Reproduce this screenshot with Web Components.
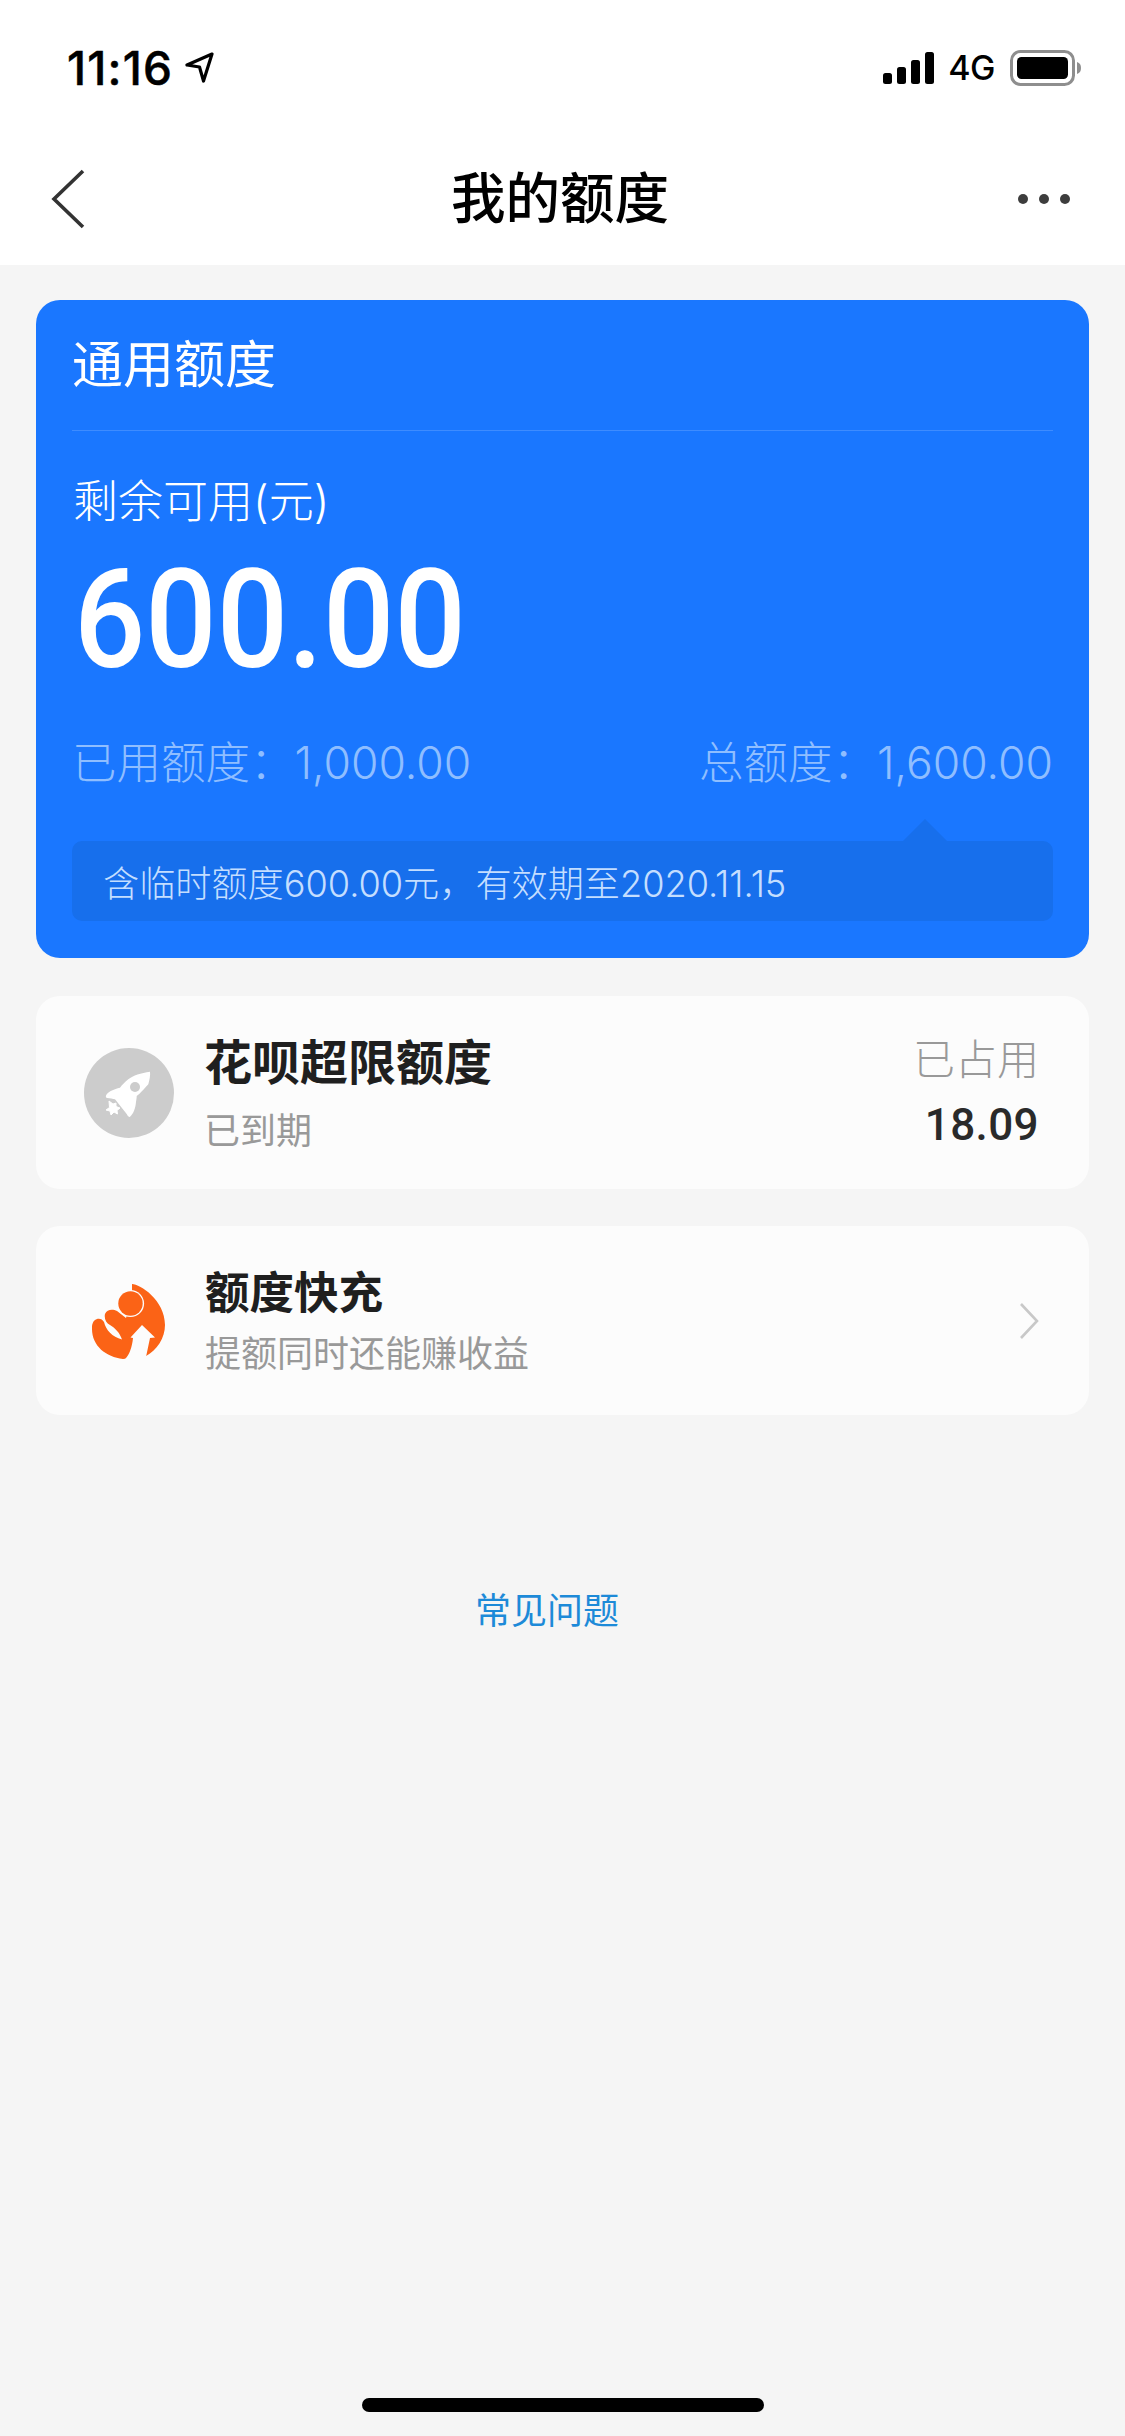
<!DOCTYPE html>
<html lang="zh">
<head>
<meta charset="utf-8">
<title>我的额度</title>
<style>
  html, body { margin: 0; padding: 0; }
  body {
    background: #f5f5f5;
    font-family: Inter, "Noto Sans CJK SC", sans-serif;
  }
  quota-page { height: 2436px; }
</style>
</head>
<body>
<quota-page>
  <status-bar time="11:16"></status-bar>
  <nav-bar title="我的额度"></nav-bar>
  <quota-card
    heading="通用额度" label="剩余可用(元)" amount="600.00"
    used="1,000.00" total="1,600.00"
    note="含临时额度600.00元，有效期至2020.11.15"></quota-card>
  <expired-row name="花呗超限额度" sub="已到期" tag="已占用" value="18.09"></expired-row>
  <charge-row name="额度快充" sub="提额同时还能赚收益"></charge-row>
  <faq-link text="常见问题"></faq-link>
</quota-page>

<script>
// --- Page shell ---
class QuotaPage extends HTMLElement {
  constructor() {
    super();
    this.attachShadow({ mode: 'open' });
    this.shadowRoot.innerHTML = `
      <style>
        :host { display: flex; flex-direction: column; box-sizing: border-box; }
        .home { margin: auto auto 24px; width: 402px; height: 14px; border-radius: 7px; background: #000; flex: none; }
      </style>
      <slot></slot>
      <div class="home"></div>
    `;
  }
}
customElements.define('quota-page', QuotaPage);

// --- Status bar ---
class StatusBar extends HTMLElement {
  constructor() {
    super();
    this.attachShadow({ mode: 'open' });
    this.shadowRoot.innerHTML = `
      <style>
        :host { display: flex; align-items: center; height: 132px; box-sizing: border-box; padding: 4px 43px 0 67px; background: #fff; color: #000; }
        .time { font: 500 46px/44px Inter, sans-serif; letter-spacing: 1.2px; -webkit-text-stroke: .5px #000; }
        .loc { margin-left: 11px; }
        .right { margin-left: auto; display: flex; align-items: center; }
        .net { font: 500 34px/34px Inter, sans-serif; margin: 0 15px 0 13px; letter-spacing: -.5px; }
      </style>
      <span class="time">${this.getAttribute('time')}</span>
      <svg class="loc" width="30" height="32" viewBox="0 0 30 32">
        <path d="M28 2 L3 13 L15.5 15 L19.5 29 Z" fill="none" stroke="#000" stroke-width="3.2" stroke-linejoin="round"/>
      </svg>
      <div class="right">
        <svg width="52" height="32" viewBox="0 0 52 32" fill="#000">
          <rect x="0" y="21" width="9" height="11" rx="2.5"/>
          <rect x="14" y="15" width="9" height="17" rx="2.5"/>
          <rect x="28" y="8" width="9" height="24" rx="2.5"/>
          <rect x="42" y="0" width="9" height="32" rx="2.5"/>
        </svg>
        <span class="net">4G</span>
        <svg width="72" height="36" viewBox="0 0 72 36">
          <rect x="1.5" y="1.5" width="62" height="33" rx="9" fill="none" stroke="#8e8e8e" stroke-width="3"/>
          <rect x="7" y="7" width="51" height="22" rx="4.5" fill="#000"/>
          <path d="M67 12 C70 13 71 15 71 18 C71 21 70 23 67 24 Z" fill="#8e8e8e"/>
        </svg>
      </div>
    `;
  }
}
customElements.define('status-bar', StatusBar);

// --- Navigation bar ---
class NavBar extends HTMLElement {
  constructor() {
    super();
    this.attachShadow({ mode: 'open' });
    this.shadowRoot.innerHTML = `
      <style>
        :host { display: grid; grid-template-columns: 1fr auto 1fr; align-items: center; height: 133px; box-sizing: border-box; padding: 0 55px 0 50px; background: #fff; }
        h1 { margin: 0 0 7px; font: 500 54.5px/60px "Noto Sans CJK SC", sans-serif; color: #000; }
        .dots { display: flex; gap: 11px; justify-self: end; }
        .dots i { width: 10px; height: 10px; border-radius: 50%; background: #3d3d3d; }
      </style>
      <svg width="36" height="60" viewBox="0 0 36 60">
        <path d="M33 2 L4 30 L33 58" fill="none" stroke="#333" stroke-width="3.6"/>
      </svg>
      <h1>${this.getAttribute('title')}</h1>
      <div class="dots"><i></i><i></i><i></i></div>
    `;
  }
}
customElements.define('nav-bar', NavBar);

// --- Blue quota card ---
class QuotaCard extends HTMLElement {
  constructor() {
    super();
    this.attachShadow({ mode: 'open' });
    const a = n => this.getAttribute(n);
    this.shadowRoot.innerHTML = `
      <style>
        :host { display: block; margin: 35px 36px 0; background: #1a77ff; border-radius: 24px; padding: 0 36px 37px; color: #fff; font-family: Inter, "Noto Sans CJK SC", sans-serif; }
        .head { height: 131px; box-sizing: border-box; padding-top: 36px; font-size: 51px; line-height: 58px; border-bottom: 1px solid rgba(255,255,255,.16); }
        .label { margin: 44px 0 0 1px; font-size: 45px; line-height: 54px; font-weight: 300; }
        .amount { display: inline-block; transform: scaleX(.91); transform-origin: 0 50%; margin: 26px 0 0 2px; font: 500 138px/130px Roboto, sans-serif; }
        .stats { display: flex; justify-content: space-between; margin-top: 50px; font-size: 44.5px; line-height: 56px; font-weight: 300; color: #8fbeff; }
        .note { position: relative; margin-top: 50px; height: 80px; box-sizing: border-box; padding-left: 31px; border-radius: 10px; background: #176fec; display: flex; align-items: center; font-size: 36.15px; font-weight: 300; color: #c4deff; }
        .note::before { content: ''; position: absolute; right: 106px; top: -22px; border: solid transparent; border-width: 0 22px 22px; border-bottom-color: #176fec; }
      </style>
      <div class="head">${a('heading')}</div>
      <div class="label">${a('label')}</div>
      <div class="amount">${a('amount')}</div>
      <div class="stats"><span>已用额度：${a('used')}</span><span>总额度：${a('total')}</span></div>
      <div class="note">${a('note')}</div>
    `;
  }
}
customElements.define('quota-card', QuotaCard);

// --- White rows ---
const ROW_STYLE = `
  :host { display: flex; align-items: center; margin: 38px 36px 0; border-radius: 24px; background: #fcfcfc; font-family: Inter, "Noto Sans CJK SC", sans-serif; box-sizing: border-box; }
  .text { display: flex; flex-direction: column; }
  .sub { color: #999; font-size: 36px; line-height: 44px; }
`;

class ExpiredRow extends HTMLElement {
  constructor() {
    super();
    this.attachShadow({ mode: 'open' });
    const a = n => this.getAttribute(n);
    this.shadowRoot.innerHTML = `
      <style>
        ${ROW_STYLE}
        :host { height: 193px; padding: 0 50px 0 48px; }
        .text { margin-left: 30px; gap: 16px; }
        .name { font-size: 48px; line-height: 60px; font-weight: 700; color: #1f1f1f; }
        .end { margin-left: auto; text-align: right; display: flex; flex-direction: column; gap: 15px; }
        .tag { font-size: 42px; line-height: 50px; color: #999; font-weight: 300; }
        .val { font: 500 44px/50px Roboto, sans-serif; color: #2a2a2a; letter-spacing: .4px; }
      </style>
      <svg width="90" height="90" viewBox="0 0 90 90">
        <circle cx="45" cy="45" r="45" fill="#ccc"/>
        <path d="M66 23.7 C57 25 49 27.5 44.3 31.3 C41 34 38 37 36 39.7 C30 41 25 43.5 22.7 46.3 C21.5 48 21.5 49.5 23 50 C26 50.5 29 50.7 31 51.3 L42.7 66 C43.5 67.5 44.7 69.5 46 68.7 C49.5 66 51.5 60 52 54 C52.5 51 52.7 49.5 52.7 48 C56 46 60 41 64.3 36.3 C65.5 32 66.5 27 66 23.7 Z" fill="#fff"/>
        <circle cx="51" cy="39" r="5" fill="#ccc"/>
        <path d="M25 53 L29 56 L32 55 L32 58.5 L36 60 L33 62.5 L33.5 66 L30 64 L27 67 L26 63 L22 62 L25.5 59.5 Z" fill="#fff" stroke="#fff" stroke-width="1" stroke-linejoin="round"/>
      </svg>
      <div class="text">
        <div class="name">${a('name')}</div>
        <div class="sub">${a('sub')}</div>
      </div>
      <div class="end">
        <div class="tag">${a('tag')}</div>
        <div class="val">${a('value')}</div>
      </div>
    `;
  }
}
customElements.define('expired-row', ExpiredRow);

class ChargeRow extends HTMLElement {
  constructor() {
    super();
    this.attachShadow({ mode: 'open' });
    const a = n => this.getAttribute(n);
    this.shadowRoot.innerHTML = `
      <style>
        ${ROW_STYLE}
        :host { height: 189px; margin-top: 37px; padding: 0 50px 0 56px; }
        .text { margin-left: 39px; gap: 12px; }
        .name { font-size: 44.5px; line-height: 54px; font-weight: 700; color: #1f1f1f; }
        .go { margin-left: auto; }
      </style>
      <svg width="74" height="76" viewBox="32 23 74 76">
        <path d="M72 24 C80 24 105 40 105 65 C105 78 97 90 86 96 L63 99 C46 97 32 86 32 69 C31 58 41 56 44 62 C46 70 52 77 62 79.5 C60 73 55 68 50 65 C46 63 44 58 45 54 C47 49 53 49 57 51 L66 58 L72 40 Z" fill="#fb6316"/>
        <circle cx="70.5" cy="43.5" r="13.6" fill="#fcfcfc"/>
        <circle cx="70.5" cy="43.5" r="12.2" fill="#fb6316"/>
        <path d="M82 65 L95 77.5 L90 78 L86 97 L106 100 L64 100 C69 96 72 88 73 78 L70.5 77.5 Z" fill="#fcfcfc"/>
      </svg>
      <div class="text">
        <div class="name">${a('name')}</div>
        <div class="sub">${a('sub')}</div>
      </div>
      <svg class="go" width="20" height="38" viewBox="0 0 20 38">
        <path d="M2 2 L18 19 L2 36" fill="none" stroke="#c8c8c8" stroke-width="2.6"/>
      </svg>
    `;
  }
}
customElements.define('charge-row', ChargeRow);

// --- FAQ link ---
class FaqLink extends HTMLElement {
  constructor() {
    super();
    this.attachShadow({ mode: 'open' });
    this.shadowRoot.innerHTML = `
      <style>
        :host { display: block; margin-top: 173px; padding-right: 31px; text-align: center; font: 36px/46px Inter, "Noto Sans CJK SC", sans-serif; color: #1d8ad8; }
      </style>
      ${this.getAttribute('text')}
    `;
  }
}
customElements.define('faq-link', FaqLink);
</script>
</body>
</html>
